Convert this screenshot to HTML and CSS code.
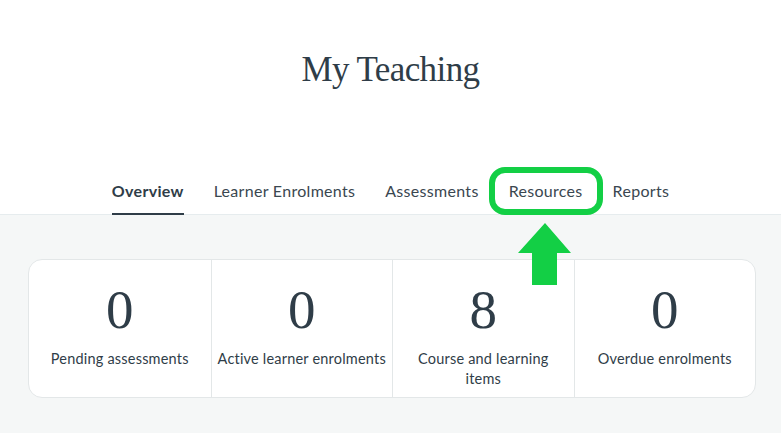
FILE: index.html
```html
<!DOCTYPE html>
<html lang="en">
<head>
<meta charset="utf-8">
<title>My Teaching</title>
<link rel="stylesheet" href="styles.css">
</head>
<body>
<header class="page-header">
  <h1 class="title">My Teaching</h1>
  <nav class="tabs">
    <a class="tab active">Overview</a>
    <a class="tab">Learner Enrolments</a>
    <a class="tab">Assessments</a>
    <a class="tab">Resources</a>
    <a class="tab">Reports</a>
  </nav>
</header>
<main class="content">
  <section class="stats">
    <div class="stat"><div class="num">0</div><div class="label">Pending assessments</div></div>
    <div class="stat"><div class="num">0</div><div class="label">Active learner enrolments</div></div>
    <div class="stat"><div class="num">8</div><div class="label">Course and learning<br>items</div></div>
    <div class="stat"><div class="num">0</div><div class="label">Overdue enrolments</div></div>
  </section>
</main>
<div class="highlight"></div>
<svg class="arrow" width="54" height="62" viewBox="0 0 54 62">
  <polygon points="27,0 53,30 39,30 39,62 14,62 14,30 0,30" fill="#13cf45"/>
</svg>
</body>
</html>
```
FILE: styles.css
```css
html, body {
  margin: 0;
  padding: 0;
  background: #ffffff;
}
body {
  font-family: "Lato", "Noto Sans", sans-serif;
  color: #2f3d48;
  position: relative;
  min-height: 433px;
  overflow: hidden;
}
.page-header {
  background: #ffffff;
  padding-top: 48px;
}
.title {
  margin: 0;
  text-align: center;
  font-family: "Liberation Serif", "DejaVu Serif", serif;
  font-weight: 400;
  font-size: 35px;
  line-height: 44px;
  letter-spacing: -0.6px;
  color: #2f3d48;
}
.tabs {
  margin-top: 83px;
  display: flex;
  justify-content: center;
  gap: 30px;
  border-bottom: 1px solid #e6ecee;
}
.tab {
  display: block;
  font-size: 16px;
  letter-spacing: 0.3px;
  line-height: 20px;
  padding: 6px 0 12px;
  color: #3a4750;
  border-bottom: 2px solid transparent;
  margin-bottom: -1px;
}
.tab.active {
  font-weight: 700;
  color: #2f3d48;
  border-bottom-color: #2f3d48;
}
.content {
  background: #f5f7f7;
  padding: 44px 25px 40px 28px;
}
.stats {
  display: grid;
  grid-template-columns: repeat(4, 1fr);
  background: #ffffff;
  border: 1px solid #e3e7e8;
  border-radius: 14px;
  height: 137px;
  overflow: hidden;
}
.stat {
  border-left: 1px solid #e3e7e8;
  text-align: center;
  padding-top: 20px;
}
.stat:first-child {
  border-left: none;
}
.num {
  font-family: "Liberation Serif", "DejaVu Serif", serif;
  font-size: 55px;
  line-height: 60px;
  color: #2f3d48;
}
.label {
  margin-top: 9px;
  font-size: 14.5px;
  letter-spacing: 0.2px;
  line-height: 20px;
  color: #2f3d48;
}
.highlight {
  position: absolute;
  left: 489px;
  top: 167px;
  width: 102px;
  height: 36px;
  border: 6px solid #13cf45;
  border-radius: 16px;
}
.arrow {
  position: absolute;
  left: 518px;
  top: 223px;
}
```
